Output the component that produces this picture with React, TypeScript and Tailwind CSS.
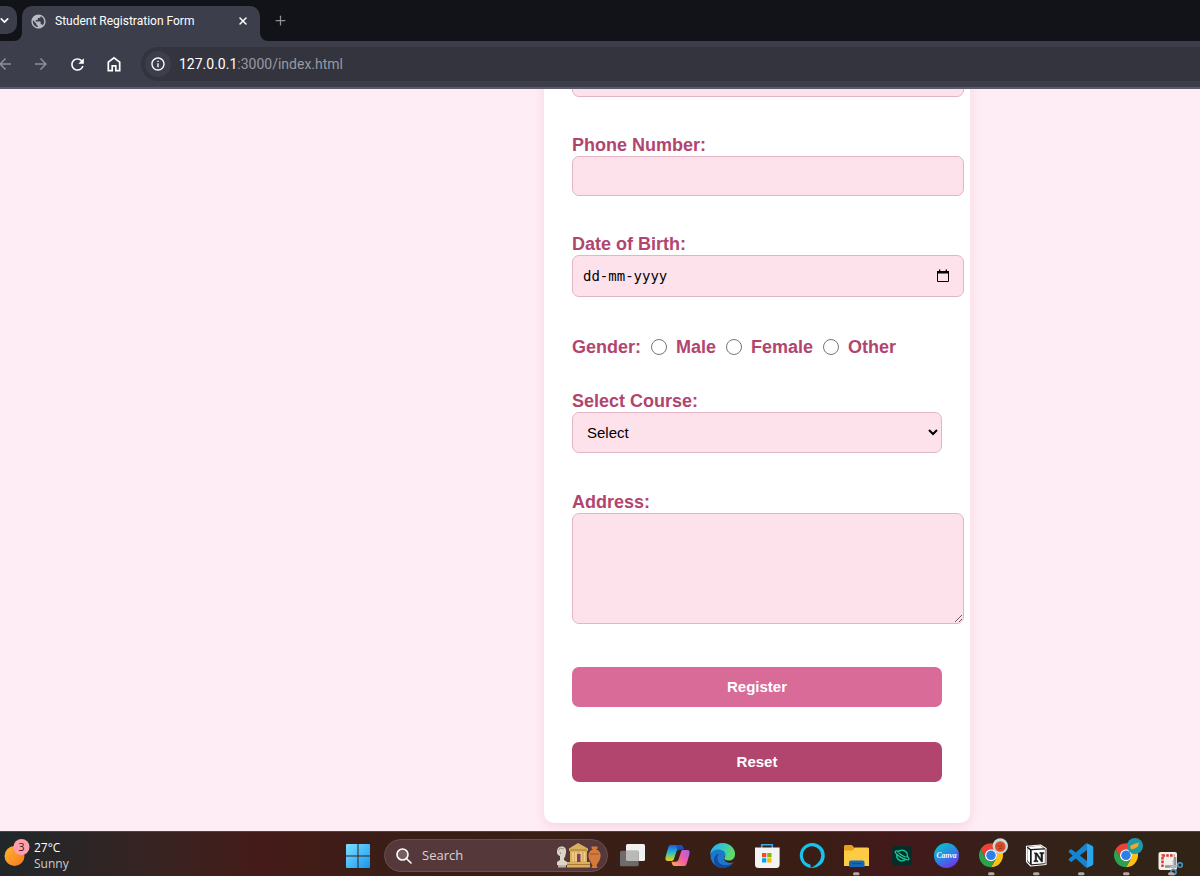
import React from "react";
import { ChevronDown, X, Plus } from "lucide-react";
import { MdArrowBack, MdArrowForward, MdRefresh, MdPublic, MdInfoOutline } from "react-icons/md";

const control = "block rounded-[7px] border border-[#e0b6c6] bg-[#fee2eb] p-[10px] text-[15px] text-black outline-none";
const label = "block leading-[22px]";

function BrowserChrome() {
  return (
    <header className="shrink-0 bg-[#3c3e4b] font-[Roboto,'Open_Sans',sans-serif]">
      <div className="flex h-[41px] items-end overflow-hidden bg-[#121318]">
        <button aria-label="Search tabs" className="-ml-[11px] mb-[7px] flex h-7 w-7 items-center justify-center rounded-[10px] bg-[#3c3e4b] pl-[2px] text-white">
          <ChevronDown size={13} strokeWidth={3} />
        </button>
        <div className="relative ml-[5px] flex h-[35px] w-[238px] items-center rounded-t-[10px] bg-[#3c3e4b] pr-[11px] pb-[5px] pl-2 text-white">
          <svg className="absolute bottom-0 -left-2" width="8" height="8" aria-hidden="true"><path d="M8 0v8H0a8 8 0 0 0 8-8Z" fill="#3c3e4b" /></svg>
          <svg className="absolute -right-2 bottom-0" width="8" height="8" aria-hidden="true"><path d="M0 0v8h8a8 8 0 0 1-8-8Z" fill="#3c3e4b" /></svg>
          <MdPublic size={17} className="text-[#b9bbc4]" />
          <span className="ml-2 flex-1 text-xs whitespace-nowrap">Student Registration Form</span>
          <button aria-label="Close tab"><X size={12} strokeWidth={3} /></button>
        </div>
        <button aria-label="New tab" className="mb-[13px] ml-[13px] text-[#8e9098]"><Plus size={15} strokeWidth={2} /></button>
      </div>
      <div className="flex h-[48px] items-center overflow-hidden border-b-2 border-[#5b5a66] text-white">
        <button aria-label="Back" className="-ml-1 text-[#8c8e98]"><MdArrowBack size={18} /></button>
        <button aria-label="Forward" className="ml-[18px] text-[#8c8e98]"><MdArrowForward size={18} /></button>
        <button aria-label="Reload" className="ml-[18px]"><MdRefresh size={19} /></button>
        <button aria-label="Home" className="ml-[18px]">
          <svg width="18" height="18" viewBox="0 0 18 18" fill="none" stroke="currentColor" strokeWidth="1.7"><path d="M3.3 7.2 9 2.8l5.700 4.400v8.500h-3.900v-4.900H7.200v4.900H3.300Z" /></svg>
        </button>
        <div className="ml-[18px] flex h-[34px] flex-1 items-center rounded-l-full bg-[#33343e] pl-1">
          <button aria-label="Site information" className="flex h-[26px] w-[26px] items-center justify-center rounded-full bg-[#3c3e4b]"><MdInfoOutline size={16} /></button>
          <div className="ml-2 text-sm whitespace-nowrap">127.0.0.1<span className="text-[#9899a2]">:3000/index.html</span></div>
        </div>
      </div>
    </header>
  );
}

function RegistrationForm() {
  return (
    <form onSubmit={(e) => e.preventDefault()} className="w-[426px] shrink-0 rounded-[10px] bg-white px-7 pt-7 pb-[41px] text-lg font-bold text-[#b2456e] shadow-[0_4px_12px_rgba(200,70,130,0.14)]">
      <input type="email" aria-label="Email" className={`${control} mb-[37px] box-content h-[18px] w-full`} />

      <label htmlFor="phone" className={label}>Phone Number:</label>
      <input id="phone" type="tel" className={`${control} mb-[37px] box-content h-[18px] w-full`} />

      <label htmlFor="dob" className={label}>Date of Birth:</label>
      <div className={`${control} mb-[39px] box-content flex h-5 w-full items-center`}>
        <input id="dob" placeholder="dd-mm-yyyy" className="min-w-0 flex-1 bg-transparent font-['DejaVu_Sans_Mono',monospace] text-sm font-normal outline-none placeholder:text-black" />
        <button type="button" aria-label="Open calendar" className="mr-[3px] text-black">
          <svg width="14" height="14" viewBox="0 0 14 14" fill="none"><path d="M1.500 2.500h11v10h-11z" stroke="currentColor" strokeWidth="1" /><path d="M1 2h12v2.500H1zM3 .5h1.300V3H3zM9.700.5H11V3H9.700z" fill="currentColor" /></svg>
        </button>
      </div>

      <div role="radiogroup" aria-labelledby="gender" className="mb-8 flex items-center leading-[22px]">
        <span id="gender">Gender:</span>
        {["Male", "Female", "Other"].map((option) => (
          <label key={option} className="ml-[10px] flex items-center gap-[9px]">
            <input type="radio" name="gender" value={option} className="h-4 w-4" />
            {option}
          </label>
        ))}
      </div>

      <label htmlFor="course" className={label}>Select Course:</label>
      <select id="course" className={`${control} mb-[38px] h-[41px] w-full py-0 font-normal`}>
        <option>Select</option>
      </select>

      <label htmlFor="address" className={label}>Address:</label>
      <textarea id="address" className={`${control} mb-[43px] box-content h-[89px] w-full font-normal`} />

      <button type="submit" className="mb-[35px] block h-10 w-full rounded-[7px] bg-[#d96b98] text-[15px] text-white">Register</button>
      <button type="reset" className="block h-10 w-full rounded-[7px] bg-[#b2456e] text-[15px] text-white">Reset</button>
    </form>
  );
}

function ChromeLogo() {
  return (
    <g transform="translate(9 12.3) scale(.5)">
      <path d="M24 12h20.800A24 24 0 0 0 3.200 12l10.400 18A12 12 0 0 1 24 12Z" fill="#ea4335" />
      <path d="M34.400 30 24 48a24 24 0 0 0 20.800-36H24a12 12 0 0 1 10.400 18Z" fill="#fbc116" />
      <path d="M13.600 30 3.200 12A24 24 0 0 0 24 48l10.400-18a12 12 0 0 1-20.800 0Z" fill="#2ba24c" />
      <circle cx="24" cy="24" r="12" fill="#fff" />
      <circle cx="24" cy="24" r="9.500" fill="#2f7de9" />
    </g>
  );
}

const apps: { name: string; running?: boolean; art: React.ReactNode }[] = [
  { name: "Task view", art: <>
    <rect x="16" y="13" width="19" height="17" rx="1.500" fill="#f1f1f1" />
    <rect x="10" y="19.700" width="18.700" height="15.500" rx="1.500" fill="#6e6b6a" />
    <path d="M16 19.700h12.700V30H17.500a1.500 1.500 0 0 1-1.500-1.500Z" fill="#b9b9b9" />
  </> },
  { name: "Copilot", art: <>
    <defs>
      <linearGradient id="cpA" x1="0" y1="0" x2="0" y2="1"><stop stopColor="#1d5be0" /><stop offset=".45" stopColor="#26b6d0" /><stop offset=".75" stopColor="#8bcf55" /><stop offset="1" stopColor="#f6c524" /></linearGradient>
      <linearGradient id="cpB" x1="1" y1="0" x2="0" y2="1"><stop stopColor="#a95df0" /><stop offset=".5" stopColor="#f0609a" /><stop offset="1" stopColor="#ffae4c" /></linearGradient>
    </defs>
    <path d="M15.500 14h9.800c2 0 2.500 1.300 3.200 4.300h-4c-1.700 0-2.600.9-3.200 2.700l-2.400 7.300c-.4 1.300-1.200 1.700-2.500 1.700h-3.800c-2.200 0-2.600-1.900-1.900-4.400l2.300-8.400c.5-1.900 1.200-3.200 2.500-3.200Z" fill="url(#cpA)" />
    <path d="M29.500 35h-9.800c-2 0-2.500-1.300-3.200-4.300h4c1.700 0 2.600-.9 3.200-2.700l2.400-7.300c.4-1.300 1.200-1.700 2.500-1.700h3.800c2.200 0 2.600 1.900 1.900 4.400L32 31.800c-.5 1.900-1.200 3.200-2.500 3.200Z" fill="url(#cpB)" />
    <path d="M21 14h4.300c2 0 2.500 1.300 3.200 4.300h-4c-1 0-1.600.3-2.200 1Z" fill="#1551c5" />
  </> },
  { name: "Edge", art: <>
    <defs><linearGradient id="edA" x1="0" y1="0" x2="1" y2=".3"><stop stopColor="#28a8e8" /><stop offset=".5" stopColor="#32c5cd" /><stop offset="1" stopColor="#5fdc62" /></linearGradient></defs>
    <path d="M22.500 12A12.500 12.500 0 1 0 33.500 31.200C30 33 25.500 31.500 24 28.500c-.6-1.600.2-2.400 1-3.500l10-1.500A12.500 12.500 0 0 0 22.500 12Z" fill="#1d78cc" />
    <path d="M18.700 22.500c-3.500 6 0 11.800 7 11.800 3 0 5.800-1.400 7.800-3.100-2.300 4-6.800 5.800-11 5.800-5.300-.3-8.500-4-8.500-8.100 0-3.200 2-5.500 4.700-6.400Z" fill="#134a9d" />
    <path d="M10 24C10.500 17 15.700 12 22.500 12 29.500 12 35 17 35 23.200c0 4.200-3 6.300-6.400 6.300-3 0-4.400-1.200-4.400-2.300 0-.8 1.300-1.500 1.300-3.500 0-3-3.200-5.300-7-5.300-4.400 0-8 2.700-8.500 5.600Z" fill="url(#edA)" />
  </> },
  { name: "Microsoft Store", art: <>
    <path d="M16.700 18v-4.300h10.600V18" fill="none" stroke="#3fa9e6" strokeWidth="1.600" />
    <path d="M10 16.500h24.600v17a3.500 3.500 0 0 1-3.500 3.500H13.500a3.500 3.500 0 0 1-3.500-3.500Z" fill="#f3f3f3" />
    <path d="M17 22h4.300v4.300H17z" fill="#f04e26" /><path d="M22.200 22h4.300v4.300h-4.300z" fill="#7fb900" /><path d="M17 27.200h4.300v4.300H17z" fill="#00a4ef" /><path d="M22.200 27.200h4.300v4.300h-4.300z" fill="#fdb900" />
  </> },
  { name: "Alexa", art: <path d="M22 12a12.500 12.500 0 0 0-1.300 24.900v-2.400c0-.5-.3-.9-.8-1A9.200 9.200 0 1 1 31.200 24.600c-.2 6-5.700 10.400-10.500 12.300A12.500 12.500 0 1 0 22 12Z" fill="#16c3ec" /> },
  { name: "File Explorer", running: true, art: <>
    <path d="M9 15.500c0-.8.600-1.500 1.500-1.500h6.300l3 3H32c1 0 2 .8 2 1.800V20H9Z" fill="#e8a019" />
    <path d="M9 19.500h8.500l2.500-3h12.500c.9 0 1.500.7 1.500 1.500v17H9Z" fill="#fdcb44" />
    <path d="M14 31.500c0-1.100.8-2 2-2h11.500c1.200 0 2 .9 2 2V36H14Z" fill="#1768b9" /><path d="M17 32.500h9.500" stroke="#0f4e91" strokeWidth="1.300" />
  </> },
  { name: "Planet", art: <>
    <rect x="12" y="15" width="20" height="19.500" rx="4" fill="#062d28" />
    <g transform="rotate(30 22 24.500)" fill="none" stroke="#16c99d" strokeWidth="1.300" strokeLinecap="round">
      <path d="M16.800 23.500a5.300 5.300 0 0 1 10.400 0M17.300 27a5.300 5.300 0 0 0 9.400 0" />
      <path d="M16.800 22.500c-3.300 1-3.500 2.500-1 3.300 3.500 1 9 1 12.400 0 2.500-.8 2.300-2.300-1-3.300M18.500 24c2 .5 5 .5 7 0" />
    </g>
  </> },
  { name: "Canva", art: <>
    <defs><linearGradient id="cnA" x1=".2" y1="0" x2=".8" y2="1"><stop stopColor="#08c4cc" /><stop offset=".5" stopColor="#2c84e4" /><stop offset="1" stopColor="#7a2ae8" /></linearGradient></defs>
    <circle cx="21.500" cy="24.500" r="12.500" fill="url(#cnA)" />
    <text x="21.500" y="27" textAnchor="middle" fill="#fff" fontSize="7.500" fontStyle="italic" fontWeight="700" fontFamily="Liberation Serif, serif">Canva</text>
  </> },
  { name: "Chrome", running: true, art: <><ChromeLogo /><circle cx="30.300" cy="15" r="7.700" fill="#c9d9d5" /><circle cx="30.300" cy="15.500" r="5.300" fill="#d74e29" /><path d="m27.500 14 3 2 2-3m-4 5 4-1" stroke="#a83419" fill="none" /></> },
  { name: "Notion", running: true, art: <>
    <path d="m11.500 15.200 14-1.200 5.500 3.500v16L15.700 35l-4.200-4.500Z" fill="#181818" stroke="#fff" strokeWidth="1.100" strokeLinejoin="round" />
    <path d="m12.700 15.800 12.600-1 3.500 2.400-13 .9ZM12.300 17l2.700 2.300v13l-2.700-3Z" fill="#fff" />
    <path d="m16.700 19.300 13.200-.9v13.800l-13.200 1Z" fill="#fff" />
    <path d="M19 21.900h3l4 6.300v-5.400l-1.200-.3v-.9h4v.9l-1.200.4v7.900h-1.400l-4.700-7.100v5.700l1.500.4v.9h-4.100v-.9l1.300-.4v-6.600Z" fill="#181818" stroke="#181818" strokeWidth=".6" />
  </> },
  { name: "Visual Studio Code", running: true, art: <>
    <g transform="translate(8.700 12.300) scale(1.020)"><path d="M23.150 2.587L18.210.210a1.494 1.494 0 0 0-1.705.290l-9.460 8.630-4.120-3.128a.999.999 0 0 0-1.276.057L.327 7.261A1 1 0 0 0 .326 8.740L3.899 12 .326 15.260a1 1 0 0 0 .001 1.479L1.650 17.940a.999.999 0 0 0 1.276.057l4.120-3.128 9.460 8.630a1.492 1.492 0 0 0 1.704.290l4.942-2.377A1.500 1.500 0 0 0 24 20.060V3.939a1.500 1.500 0 0 0-.850-1.352zm-5.146 14.861L10.826 12l7.178-5.448v10.896z" fill="#1684cf" /><path d="m18 .100 5.150 2.487A1.500 1.500 0 0 1 24 3.939V20.060a1.500 1.500 0 0 1-.850 1.352L18 23.900Z" fill="#2da5ee" /></g>
  </> },
  { name: "Chrome second profile", running: true, art: <><ChromeLogo /><circle cx="30" cy="15" r="8" fill="#1c9aa8" /><path d="m25 15 4-2 5-1.500-1 4-3 2-4 1Z" fill="#f0a52d" /></> },
  { name: "Snipping Tool", running: true, art: <>
    <rect x="8.500" y="21" width="18.500" height="18" rx="2" fill="#f2efed" />
    <path d="M12.500 36V24.500h12" fill="none" stroke="#cf3d2e" strokeWidth="2.400" strokeDasharray="2.600 1.200" />
    <path d="M15 35.500h10V26" fill="none" stroke="#8f9298" strokeWidth="2.600" />
    <path d="m20 36 8-1.500M23.500 29v9" stroke="#b8bcc2" strokeWidth="1.600" />
    <g fill="none" stroke="#419bd3" strokeWidth="1.500"><circle cx="30" cy="34" r="2.300" /><circle cx="23.500" cy="41" r="2.600" /></g>
  </> },
];

function Taskbar() {
  return (
    <footer className="flex h-[45px] shrink-0 items-center overflow-hidden border-t border-[#54413e] bg-[linear-gradient(90deg,#20272a_0%,#392321_14%,#451b18_22%,#391e17_34%,#3a1e16_68%,#43191a_75%,#35211a_84%,#302416_100%)] pt-[3px] font-['Open_Sans','Noto_Sans',sans-serif] text-white">
      <div className="flex w-[336px] items-center pl-1">
        <svg width="28" height="36" viewBox="0 1 28 36" aria-label="Weather, 3 alerts">
          <defs><linearGradient id="sun" x1="0" y1="0" x2="1" y2="1"><stop stopColor="#ffb52e" /><stop offset="1" stopColor="#f47a20" /></linearGradient></defs>
          <circle cx="10.500" cy="19" r="10" fill="url(#sun)" /><circle cx="17.500" cy="10" r="8" fill="#ff9fae" />
          <text x="17.500" y="14" textAnchor="middle" fontSize="11" fill="#3a1518" fontFamily="Open Sans, sans-serif">3</text>
        </svg>
        <div className="ml-[2px] text-xs leading-4"><div>27°C</div><div className="text-[#d0cccb]">Sunny</div></div>
      </div>
      <button aria-label="Start" className="flex w-11 justify-center">
        <svg width="24" height="24" viewBox="0 0 24 24"><defs><linearGradient id="win" x1="0" y1="0" x2="1" y2="1"><stop stopColor="#7be0ff" /><stop offset="1" stopColor="#1597ee" /></linearGradient></defs><path d="M0 1a1 1 0 0 1 1-1h10.500v11.500H0ZM12.500 0H23a1 1 0 0 1 1 1v10.500H12.500ZM0 12.500h11.500V24H1a1 1 0 0 1-1-1ZM12.500 12.500H24V23a1 1 0 0 1-1 1H12.500Z" fill="url(#win)" /></svg>
      </button>
      <label className="ml-1 flex h-[33px] w-[224px] items-center rounded-full border border-[#6a504d] bg-[#55393a] pr-[6px] pl-[11px]">
        <svg width="16" height="16" viewBox="0 0 16 16" fill="#765f5f" stroke="#fff" strokeWidth="1.600" strokeLinecap="round"><circle cx="6.500" cy="6.500" r="5.500" /><path d="m10.700 10.700 4.300 4.300" /></svg>
        <input aria-label="Search" placeholder="Search" className="ml-[10px] min-w-0 flex-1 bg-transparent text-[13px] outline-none placeholder:text-[#dcd3d2]" />
        <svg width="46" height="26" viewBox="0 0 46 26" aria-hidden="true">
          <path d="M2 9c0-4 2-5.500 5-5.500S11.500 6 11 9.500l-1 4.500-1 1v2l3 2v3H2v-3l3-2v-4c-2-.5-3-2-3-4Z" fill="#ded5c8" /><path d="M3 22h8v2.500H3z" fill="#bdb2a4" /><path d="m3 8 2-3 4 1m-4 3 1 2" stroke="#9c9184" fill="none" />
          <path d="M14 5.500 23 0l10 5.500V8H14ZM15 8h17v11H15ZM12 19h23v5.500H12Z" fill="#d9ae5e" /><path d="M18 9v9M21 9v9M26 9v9M29.500 9v9" stroke="#f1d38e" strokeWidth="1.400" /><path d="M22 11h3.500v8H22Z" fill="#7b3c70" /><path d="M12 21.500h23M15 7h17" stroke="#a97931" />
          <path d="M36.500 3.500h6v2l-1.500 1c3.500 1 5 4 4.500 7.500-.5 3.500-3 6-4 8.500l1 2.500h-6l1-2.500c-1-2.500-3.500-5-4-8.500-.5-3.500 1-6.500 4.500-7.500l-1.500-1Z" fill="#d57a3d" /><path d="M35 11h9" stroke="#a4532c" />
        </svg>
      </label>
      <nav aria-label="Apps" className="ml-[2px] flex">
        {apps.map((app) => (
          <button key={app.name} aria-label={app.name} className="w-[45px]">
            <svg width="45" height="43" viewBox="0 3 45 43">
              {app.art}
              {app.running && <rect x="18" y="41.300" width="6.500" height="3" rx="1.500" fill="#b5a8a3" />}
            </svg>
          </button>
        ))}
      </nav>
    </footer>
  );
}

export default function App() {
  return (
    <div className="flex h-screen flex-col overflow-hidden">
      <BrowserChrome />
      <main className="flex min-h-0 flex-1 items-end justify-center overflow-hidden bg-[#ffedf5] pb-2 pl-[314px] font-['Liberation_Sans',Arial,sans-serif]">
        <RegistrationForm />
      </main>
      <Taskbar />
    </div>
  );
}
